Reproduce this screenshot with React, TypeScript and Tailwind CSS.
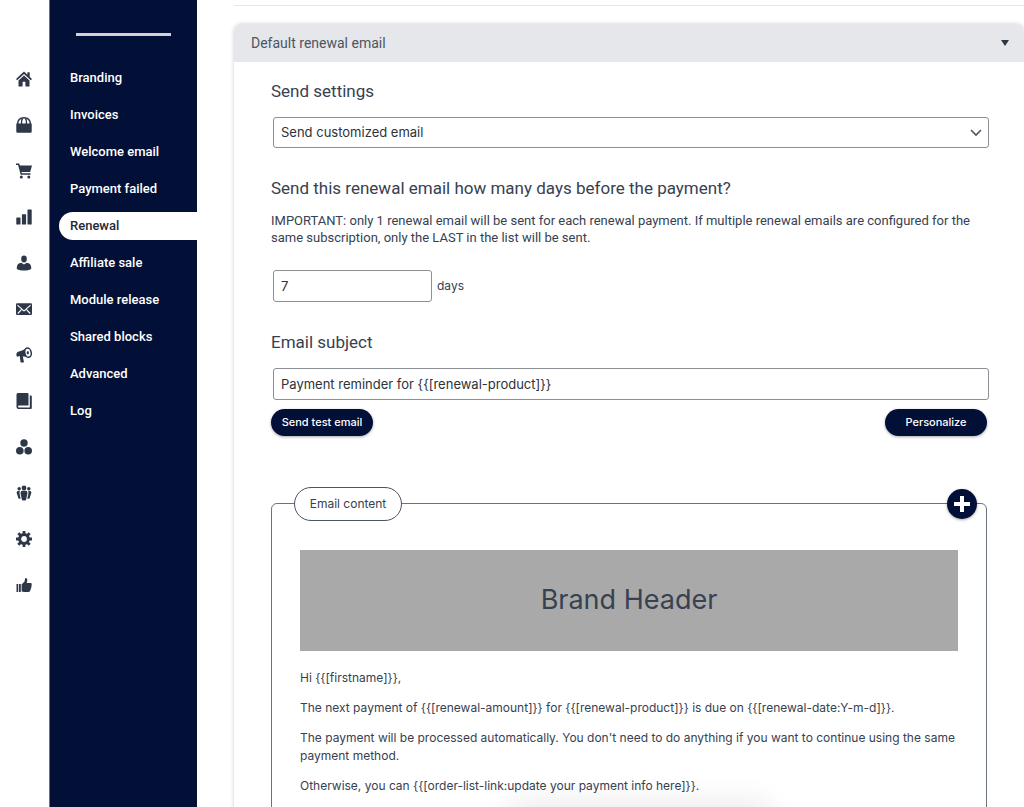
import { useState } from "react";
import type { ReactNode } from "react";

const railIcons: { label: string; art: ReactNode }[] = [
  {
    label: "Dashboard",
    art: (
      <>
        <path d="M8 .6 0 8l1.200 1.300L8 3.100l6.800 6.200L16 8l-2.300-2.200V1.300h-2.300v2.400z" />
        <path d="M8 4.500 2.500 9.500v6h4.100v-4.700h2.800v4.700h4.100v-6z" />
      </>
    ),
  },
  {
    label: "Products",
    art: (
      <>
        <path d="M.3 6.500h15.400v8.200a1.100 1.100 0 0 1-1.100 1.100H1.400a1.100 1.100 0 0 1-1.100-1.100z" />
        <path d="M1.600 7C1.800 2.500 3.500.7 8 .7s6.200 1.800 6.400 6.300M5.500 7C5.500 4 5.900 2 6.700 1M10.500 7C10.500 4 10.100 2 9.300 1" fill="none" stroke="currentColor" strokeWidth="1.400" />
      </>
    ),
  },
  {
    label: "Orders",
    art: (
      <>
        <path d="M0 0.500h3.200l.7 2H16L14.200 9H5.500l.4 1.300h8.600v1.500H4.700L2.100 2H0z" />
        <circle cx="5.300" cy="14" r="1.500" />
        <circle cx="12.800" cy="14" r="1.500" />
      </>
    ),
  },
  {
    label: "Reports",
    art: (
      <>
        <rect x="0.300" y="8.500" width="4.200" height="7" rx=".5" />
        <rect x="5.900" y="5.200" width="4.200" height="10.300" rx=".5" />
        <rect x="11.500" y=".5" width="4.200" height="15" rx=".5" />
      </>
    ),
  },
  {
    label: "Customers",
    art: (
      <>
        <ellipse cx="8" cy="4" rx="2.800" ry="3.400" />
        <path d="M5.300 7.800 8 9.500l2.700-1.700c3 .5 4.500 2 4.500 4.700v1.600c-4 2-10.400 2-14.400 0v-1.600c0-2.700 1.500-4.200 4.500-4.700z" />
      </>
    ),
  },
  {
    label: "Emails",
    art: (
      <>
        <rect x="0" y="2.300" width="16" height="11.700" rx="1.200" />
        <path d="m1.500 4.200 5.500 5q1 .8 2 0l5.500-5M1.800 12.500l3.700-3.800M14.200 12.500l-3.700-3.800" fill="none" stroke="white" strokeWidth="1.100" />
      </>
    ),
  },
  {
    label: "Marketing",
    art: (
      <>
        <path d="M10 1C7.500 3.500 4.500 4 2 4.800.300 5.500-.200 8.500 1.200 9.800L3.800 9l.7 6.200q1.500.8 3.500 0L6.800 9.500c1.700-.3 3.200.2 5.200.8z" />
        <ellipse cx="12" cy="5.700" rx="3.200" ry="4.700" transform="rotate(-12 12 5.700)" fill="white" stroke="currentColor" strokeWidth="1.500" />
        <ellipse cx="11.800" cy="5.800" rx="1.100" ry="1.800" />
      </>
    ),
  },
  {
    label: "Courses",
    art: (
      <path d="M2 0h9.500a1 1 0 0 1 1 1v11.500H3q-1 0-1 1t1 1h10.800V2.500H15a.8.8 0 0 1 .8.800V15a1 1 0 0 1-1 1H2.500Q.500 16 .500 14V1.500Q.500 0 2 0z" />
    ),
  },
  {
    label: "Modules",
    art: (
      <>
        <circle cx="8" cy="4" r="3.700" />
        <circle cx="3.800" cy="11.700" r="3.800" />
        <circle cx="12.200" cy="11.700" r="3.800" />
      </>
    ),
  },
  {
    label: "Members",
    art: (
      <>
        <circle cx="8" cy="3" r="2.400" />
        <circle cx="3.200" cy="3.700" r="1.700" />
        <circle cx="12.800" cy="3.700" r="1.700" />
        <path d="M6.400 5.800h3.200c1.400 0 1.900 1 1.800 2.700-.1 2-.7 2.500-1 5q-.2 2-1.200 2H6.800q-1 0-1.200-2c-.3-2.500-.9-3-1-5-.1-1.700.4-2.700 1.800-2.700z" />
        <path d="M2.200 6h1.700Q3.300 7 3.700 9.200c.2 1.500.7 2.600.9 4.500H3.300c-1.300 0-1.100-1.600-1.700-3.200C.7 8.700-.2 6.300 2.200 6zM13.800 6h-1.700q.6 1 .2 3.200c-.2 1.500-.7 2.600-.9 4.500h1.300c1.300 0 1.100-1.600 1.700-3.200.9-1.800 1.800-4.200-.6-4.500z" />
      </>
    ),
  },
  {
    label: "Settings",
    art: (
      <>
        <circle cx="8" cy="8" r="4.400" fill="none" stroke="currentColor" strokeWidth="3" />
        <path d="M8 0v4M8 12v4M0 8h4M12 8h4M2.300 2.300l2.800 2.800M10.900 10.900l2.800 2.800M13.700 2.300l-2.800 2.800M5.100 10.900l-2.800 2.800" stroke="currentColor" strokeWidth="2.800" />
      </>
    ),
  },
  {
    label: "Feedback",
    art: (
      <path d="M.500 7H2v8H.500zM2.800 7h2v8h-2zM5.600 7.500 8.500 4.500 9.300 1q1.800-.2 2 1.500.1 1.700-.6 3.500H15q1.200.6.500 2 .4 1-.3 1.900.3 1.200-.5 2 .2 1.200-.7 1.900-.2 1.200-1.700 1.200H8q-1.200 0-2.400-.8z" />
    ),
  },
];

const sections = [
  "Branding",
  "Invoices",
  "Welcome email",
  "Payment failed",
  "Renewal",
  "Affiliate sale",
  "Module release",
  "Shared blocks",
  "Advanced",
  "Log",
];

const fieldClass =
  "rounded-[3px] border border-[#8c8f94] bg-white px-[7px] font-[Inter,sans-serif] text-[13px] text-[#2c3338]";
const headingClass = "block text-[17px] leading-6 text-[#374151]";
const pillClass =
  "h-[27px] w-[102px] rounded-full bg-[#020f36] font-[Inter,sans-serif] text-[11px] font-medium text-white shadow-[0_1px_3px_rgba(0,0,0,0.35)]";

export default function App() {
  const [active, setActive] = useState("Renewal");
  const [mode, setMode] = useState("custom");
  const [days, setDays] = useState("7");
  const [subject, setSubject] = useState("Payment reminder for {{[renewal-product]}}");

  return (
    <div className="relative flex h-screen overflow-hidden bg-white font-[Roboto,sans-serif] text-[#374151]">
      <nav aria-label="Main" className="flex w-[50px] shrink-0 flex-col items-center gap-[30px] border-r border-[#6b7280] pt-[71px] pr-0.5">
        {railIcons.map((icon) => (
          <a key={icon.label} href="#" aria-label={icon.label} className="block text-[#2d3748]">
            <svg viewBox="0 0 16 16" className="block size-4" fill="currentColor" aria-hidden="true">
              {icon.art}
            </svg>
          </a>
        ))}
      </nav>

      <aside className="w-[147px] shrink-0 bg-[#020f36] pt-[33px]">
        <hr className="mx-[26px] h-[3px] border-0 bg-[#d6d2d3]" />
        <nav aria-label="Email settings" className="mt-7 flex flex-col gap-[9px] pl-[9px]">
          {sections.map((name) => (
            <a
              key={name}
              href="#"
              onClick={() => setActive(name)}
              aria-current={active === name ? "page" : undefined}
              className={
                active === name
                  ? "flex h-7 items-center rounded-l-full bg-white pl-[11px] text-[13px] font-medium text-[#1f2937]"
                  : "flex h-7 items-center pl-[11px] text-[13px] font-medium text-white"
              }
            >
              {name}
            </a>
          ))}
        </nav>
      </aside>

      <main className="min-w-0 flex-1 pt-[5px] pl-[37px]">
        <div className="border-t border-[#e5e7eb]" />
        <section className="mt-[18px] rounded-lg bg-white shadow-[0_0_4px_rgba(0,0,0,0.2)]">
          <h2>
            <button type="button" aria-expanded="true" className="flex h-[38px] w-full items-center justify-between rounded-t-lg bg-[#e5e7eb] pr-[15px] pl-[17px] text-sm text-[#4b5563]">
              Default renewal email
              <svg viewBox="0 0 8 6" className="h-1.5 w-2" fill="#2d3748" aria-hidden="true">
                <path d="M0 0h8L4 6z" />
              </svg>
            </button>
          </h2>

          <div className="pt-[17px] pr-[35px] pb-10 pl-[37px]">
            <label htmlFor="mode" className={headingClass}>Send settings</label>
            <div className="relative mt-[14px] ml-0.5">
              <select id="mode" value={mode} onChange={(e) => setMode(e.target.value)} className={`${fieldClass} block h-[31px] w-full appearance-none`}>
                <option value="custom">Send customized email</option>
              </select>
              <svg viewBox="0 0 12 8" className="pointer-events-none absolute top-3 right-[7px] h-2 w-3" fill="none" stroke="#4b5563" strokeWidth="1.600" aria-hidden="true">
                <path d="m1 1 5 5 5-5" />
              </svg>
            </div>

            <label htmlFor="days" className={`${headingClass} mt-7`}>
              Send this renewal email how many days before the payment?
            </label>
            <p className="mt-3 text-[13px] leading-[17px]">
              IMPORTANT: only 1 renewal email will be sent for each renewal payment. If multiple renewal emails are configured for the same subscription, only the LAST in the list will be sent.
            </p>
            <div className="mt-6 ml-0.5 flex items-center gap-[5px] font-[Inter,sans-serif] text-xs">
              <input id="days" value={days} onChange={(e) => setDays(e.target.value)} className={`${fieldClass} h-8 w-[159px]`} />
              days
            </div>

            <label htmlFor="subject" className={`${headingClass} mt-7`}>Email subject</label>
            <div className="mt-[14px] ml-0.5">
              <input id="subject" value={subject} onChange={(e) => setSubject(e.target.value)} className={`${fieldClass} block h-8 w-full`} />
            </div>
            <div className="mt-[9px] mr-0.5 flex justify-between">
              <button type="button" className={pillClass}>Send test email</button>
              <button type="button" className={pillClass}>Personalize</button>
            </div>

            <div className="relative mt-[67px] mr-0.5 rounded-md border border-[#6b7280] px-7 pt-[46px] pb-10 font-[Inter,sans-serif]">
              <h3 className="absolute -top-[17px] left-[22px] flex h-[34px] w-[108px] items-center justify-center rounded-full border border-[#4b5563] bg-white text-xs">
                Email content
              </h3>
              <button type="button" aria-label="Add block" className="absolute -top-[15px] right-[9px] flex size-[30px] items-center justify-center rounded-full bg-[#020f36] text-white shadow-[0_1px_3px_rgba(0,0,0,0.35)]">
                <svg viewBox="0 0 16 16" className="size-4" fill="currentColor" aria-hidden="true">
                  <path d="M6 0h4v6h6v4h-6v6H6v-6H0V6h6z" />
                </svg>
              </button>
              <div className="flex h-[101px] items-center justify-center bg-[#a9a9a9] text-[27px]">Brand Header</div>
              <div className="mt-[18px] flex flex-col gap-3 text-xs leading-[18px]">
                <p>{"Hi {{[firstname]}},"}</p>
                <p>{"The next payment of {{[renewal-amount]}} for {{[renewal-product]}} is due on {{[renewal-date:Y-m-d]}}."}</p>
                <p>The payment will be processed automatically. You don't need to do anything if you want to continue using the same payment method.</p>
                <p>{"Otherwise, you can {{[order-list-link:update your payment info here]}}."}</p>
              </div>
            </div>
          </div>
        </section>
      </main>

      <div className="pointer-events-none absolute top-full left-1/2 h-5 w-64 rounded-full shadow-[0_0_28px_6px_rgba(0,0,0,0.08)]" />
    </div>
  );
}
